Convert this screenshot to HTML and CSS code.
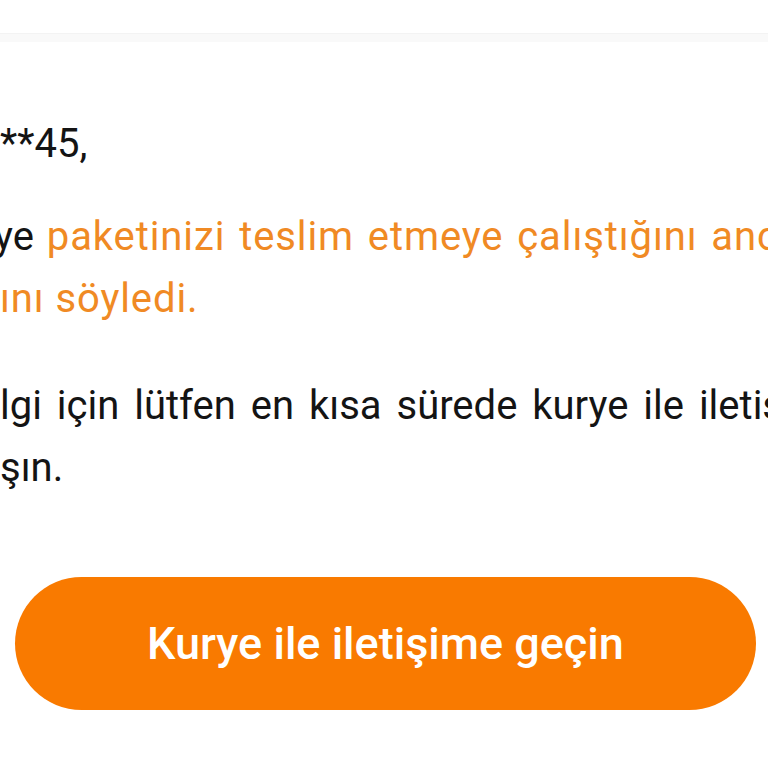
FILE: index.html
```html
<!DOCTYPE html>
<html>

<head>
    <meta http-equiv="Content-Type" content="text/html;charset=utf-8">
    <title>Teslimat bildirimi</title>
    <link rel="stylesheet" href="styles.css">
</head>

<body>
    <div class="page">
        <div class="header"></div>
        <div class="divider"></div>

        <div class="content">
            <div class="line greeting">
                <span class="cut">Sayın 0555*</span>
                <span>**45,</span>
            </div>

            <div class="para">
                <div class="line justified-sm">
                    <span class="cut">Kur</span>
                    <span class="pull">ye <span class="hl">paketinizi teslim etmeye çalıştığını ancak size</span></span>
                </div>
                <div class="line">
                    <span class="cut">ulaşamadığ</span>
                    <span class="hl">ını söyledi.</span>
                </div>
            </div>

            <div class="para">
                <div class="line justified">
                    <span class="cut">Daha fazla bi</span>
                    <span>lgi için lütfen en kısa sürede kurye ile iletişime</span>
                </div>
                <div class="line">
                    <span class="cut">geçin veya bize ula</span>
                    <span>şın.</span>
                </div>
            </div>

            <button class="contact-btn">Kurye ile iletişime geçin</button>
        </div>
    </div>
</body>

</html>
```

FILE: styles.css
```css
body {
    margin: 0;
    font-family: Roboto, "Noto Sans", Arial, sans-serif;
    background: #ffffff;
    color: #141414;
}

.page {
    width: 768px;
    height: 768px;
    overflow: hidden; /* metin kenarlardan taşıyor */
    background: #ffffff;
}

.header {
    height: 33px;
    border-bottom: 1px solid #f3f3f3;
}

.divider {
    height: 8px;
    background: #f9f9f9;
}

.content {
    display: flex;
    flex-direction: column;
    padding-top: 71px;
}

.line {
    display: flex;
    white-space: nowrap;
    font-size: 40px;
    line-height: 62px;
}

/* iki yana yaslı satırlardaki geniş boşluklar */
.justified-sm {
    word-spacing: 3px;
}

.justified {
    word-spacing: 5px;
}

/* satırın soldan kesilen kısmı */
.cut {
    flex: none;
    width: 0;
    display: flex;
    justify-content: flex-end;
    overflow: hidden;
}

.pull {
    margin-left: -6px;
}

.para {
    margin-top: 31px;
}

.para + .para {
    margin-top: 45px;
}

.hl {
    color: #f08a24;
    letter-spacing: 0.9px;
}

.contact-btn {
    margin: 78px 0 0 15px;
    width: 741px;
    height: 133px;
    border: none;
    border-radius: 67px;
    background: #f97a00;
    color: #ffffff;
    font-family: Roboto, "Noto Sans", Arial, sans-serif;
    font-size: 45px;
    font-weight: 500;
    padding: 0;
}
```
